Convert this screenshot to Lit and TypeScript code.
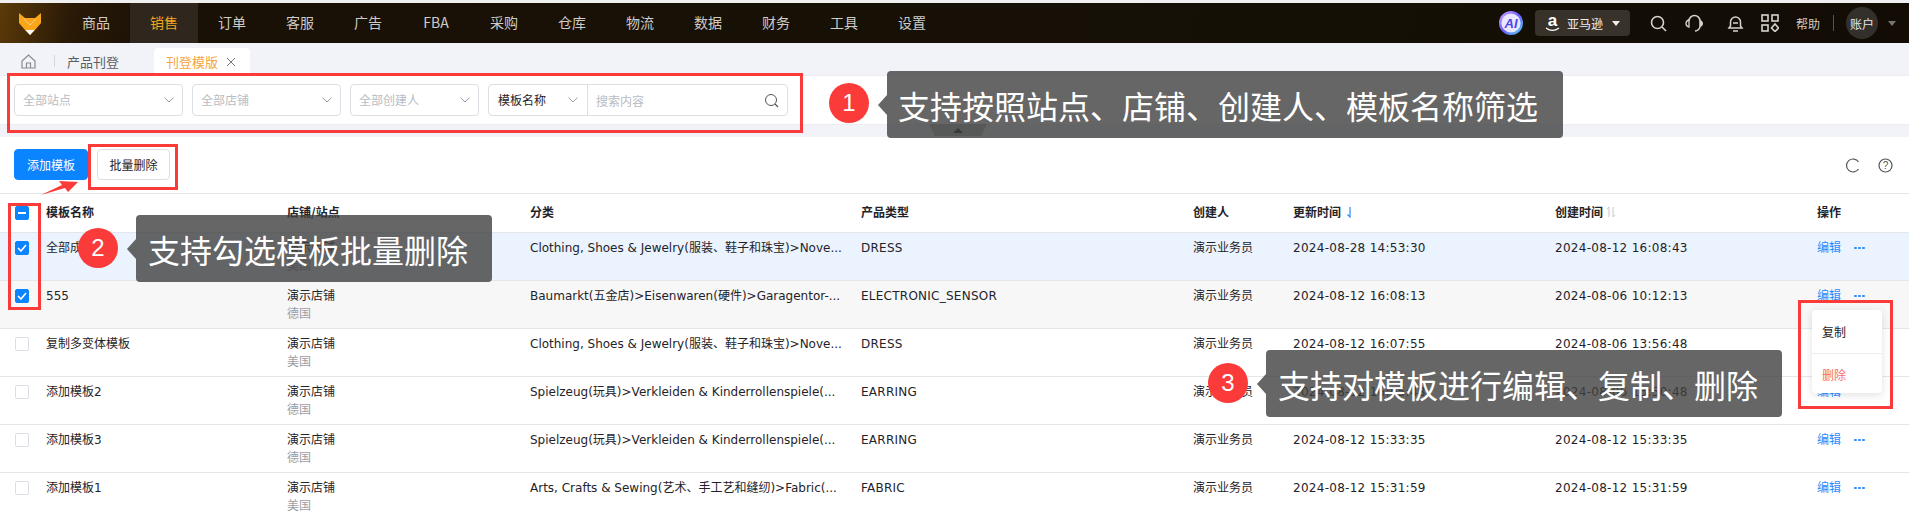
import { LitElement, html, css, svg } from "lit";
import { customElement } from "lit/decorators.js";

const NAV = ["商品", "销售", "订单", "客服", "广告", "FBA", "采购", "仓库", "物流", "数据", "财务", "工具", "设置"];
const ROWS = [
  { name: "全部成人", store: "演示店铺", site: "美国", cat: "Clothing, Shoes & Jewelry(服装、鞋子和珠宝)>Nove...", type: "DRESS", up: "2024-08-28 14:53:30", cr: "2024-08-12 16:08:43", cls: "sel2", check: true },
  { name: "555", store: "演示店铺", site: "德国", cat: "Baumarkt(五金店)>Eisenwaren(硬件)>Garagentor-...", type: "ELECTRONIC_SENSOR", up: "2024-08-12 16:08:13", cr: "2024-08-06 10:12:13", cls: "hov", check: true },
  { name: "复制多变体模板", store: "演示店铺", site: "美国", cat: "Clothing, Shoes & Jewelry(服装、鞋子和珠宝)>Nove...", type: "DRESS", up: "2024-08-12 16:07:55", cr: "2024-08-06 13:56:48", cls: "", check: false },
  { name: "添加模板2", store: "演示店铺", site: "德国", cat: "Spielzeug(玩具)>Verkleiden & Kinderrollenspiele(...", type: "EARRING", up: "2024-08-12 16:05:48", cr: "2024-08-06 13:50:48", cls: "", check: false },
  { name: "添加模板3", store: "演示店铺", site: "德国", cat: "Spielzeug(玩具)>Verkleiden & Kinderrollenspiele(...", type: "EARRING", up: "2024-08-12 15:33:35", cr: "2024-08-12 15:33:35", cls: "", check: false },
  { name: "添加模板1", store: "演示店铺", site: "美国", cat: "Arts, Crafts & Sewing(艺术、手工艺和缝纫)>Fabric(...", type: "FABRIC", up: "2024-08-12 15:31:59", cr: "2024-08-12 15:31:59", cls: "", check: false },
];

const chev = svg`<svg class="chev" viewBox="0 0 10 6" width="10" height="6"><path d="M.5.5 5 5 9.5.5" fill="none" stroke="currentColor" stroke-width="1"/></svg>`;

@customElement("app-root")
export class AppRoot extends LitElement {
  static styles = css`
    :host { display: block; width: 1909px; height: 520px; overflow: hidden; position: relative; background: #fff;
      font-family: "Noto Sans CJK SC", "Noto Sans", sans-serif; font-size: 12px; color: #1f2329; }
    * { box-sizing: border-box; }
    .strip { height: 3px; background: #f0f0f0; }
    .nav { height: 40px; display: flex; align-items: center; color: #cfcbc6;
      background: linear-gradient(100deg, #5c3a08 0, #2a1a06 70px, #1a1106 150px, #151006 1300px, #120c05 100%); }
    .logo { width: 62px; height: 40px; display: flex; align-items: center; padding-left: 19px; flex: none; }
    .item { width: 68px; height: 40px; display: flex; align-items: center; justify-content: center; font-size: 14px; flex: none; padding-bottom: 2px; }
    .item.on { background: #2f271d; color: #f5a623; }
    .right { margin-left: auto; display: flex; align-items: center; height: 40px; padding-right: 13px; }
    .pill { width: 95px; height: 26px; margin-left: 12px; background: #39322a; border-radius: 4px; display: flex; align-items: center;
      color: #f1efec; padding-left: 10px; font-size: 12px; gap: 7px; }
    .pill .cap { width: 0; height: 0; border: 4px solid transparent; border-top: 5px solid #f1efec; border-bottom: 0; margin-left: 2px; }
    .ic { color: #d6d3cf; display: block; flex: none; }
    .help { color: #cfcbc6; margin-left: 17px; font-size: 12px; }
    .dv { width: 1px; height: 16px; background: #57524b; margin: 0 12px 0 13px; }
    .avatar { width: 32px; height: 32px; border-radius: 50%; background: #33302b; color: #e8e6e3; display: flex; align-items: center; justify-content: center; font-size: 12px; }
    .cap2 { width: 0; height: 0; border: 4px solid transparent; border-top: 5px solid #77736d; border-bottom: 0; margin-left: 10px; }

    .crumbs { height: 32px; background: #f1f3f8; display: flex; align-items: flex-end; }
    .home { width: 54px; height: 28px; display: flex; align-items: center; padding-left: 21px; color: #868b94; }
    .sep { width: 1px; height: 12px; background: #d5d7dc; margin-bottom: 8px; }
    .crumb { width: 99px; height: 28px; padding-left: 12px; display: flex; align-items: center; font-size: 13px; color: #595e66; }
    .tab { width: 96px; height: 27px; background: #fff; border-radius: 4px 4px 0 0; padding-left: 12px; display: flex; align-items: center; gap: 8px; color: #f5a640; font-size: 13px; }
    .tab svg { color: #777; }

    .filter { height: 50px; background: #fff; padding: 8px 14px; display: flex; gap: 9px; border-bottom: 1px solid #ebedf0; border-top: 1px solid #ebedf0; }
    .sel { height: 32px; border: 1px solid #dcdfe6; border-radius: 4px; display: flex; align-items: center; justify-content: space-between; padding: 0 8px 1px; color: #b8bcc4; font-size: 12px; }
    .sel .chev { color: #9aa0a8; }
    .s1 { width: 169px; } .s2 { width: 149px; } .s3 { width: 129px; }
    .combo { width: 300px; height: 32px; border: 1px solid #dcdfe6; border-radius: 4px; display: flex; align-items: center; }
    .combo .a { width: 99px; height: 100%; border-right: 1px solid #dcdfe6; display: flex; align-items: center; justify-content: space-between; padding: 0 9px 1px; color: #1f2329; }
    .combo .a .chev { color: #9aa0a8; }
    .combo .b { flex: 1; padding: 0 8px; color: #b8bcc4; display: flex; justify-content: space-between; align-items: center; }
    .gap { height: 12px; background: #f1f3f8; }

    .tools { height: 57px; display: flex; align-items: flex-start; gap: 9px; padding: 12px 14px 0; border-bottom: 1px solid #e4e6ea; }
    .btn { width: 73px; height: 31px; border-radius: 4px; display: flex; align-items: center; justify-content: center; font-size: 12px; border: 1px solid #dcdfe6; background: #fff; color: #1f2329; }
    .btn.pri { background: #0a84ff; border-color: #0a84ff; color: #fff; width: 74px; }
    .tools .end { margin-left: auto; display: flex; align-items: center; gap: 18px; padding: 9px 2px 0 0; color: #555; }

    .row { display: grid; grid-template-columns: 46px 241px 243px 331px 332px 100px 262px 262px 1fr; height: 48px; border-bottom: 1px solid #e4e6ea; padding-top: 6px; line-height: 18px;
      font-family: "DejaVu Sans", "Noto Sans CJK SC", sans-serif; white-space: nowrap; }
    .row.head { height: 39px; font-weight: 700; padding-top: 9px; font-family: "Noto Sans CJK SC", sans-serif; }
    .row.sel2 { background: #eaf3fe; }
    .row.hov { background: #f7f7f7; }
    .cb { width: 14px; height: 14px; margin: 2px 0 0 15px; border: 1.5px solid #dcdfe6; border-radius: 2px; background: #fff; display: flex; align-items: center; justify-content: center; }
    .head .cb { margin-top: 3px; }
    .cb.on { background: #0a84ff; border-color: #0a84ff; color: #fff; }
    .site { color: #9a9da3; }
    .time { letter-spacing: .28px; }
    .type { letter-spacing: .25px; }
    .sort { display: flex; align-items: center; align-self: start; height: 18px; }
    .ops { display: flex; align-items: center; gap: 13px; color: #2a8cff; height: 18px; }
    .dots { display: flex; gap: 1.5px; }
    .dots i { width: 2.5px; height: 2.5px; background: #2a8cff; border-radius: 50%; display: block; }

    .menu { position: absolute; left: 1812px; top: 310px; width: 70px; height: 83px; background: #fff; border-radius: 4px; box-shadow: 0 2px 8px rgba(0,0,0,.12); display: flex; flex-direction: column; }
    .menu div { display: flex; align-items: center; padding-left: 10px; height: 43px; }
    .menu div + div { border-top: 1px solid #ebedf0; color: #f56c6c; height: 40px; padding-top: 2px; }

    .red { position: absolute; border: 3px solid #fb3a3a; }
    .bubble { position: absolute; height: 67px; background: rgba(64,64,64,.8); color: #fff; border-radius: 4px; font-size: 32px; display: flex; align-items: center; white-space: nowrap; line-height: 1; }
    .bubble::before { content: ""; position: absolute; left: -9px; top: 50%; margin-top: -10px; border: 10px solid transparent; border-right: 9px solid rgba(64,64,64,.8); border-left: 0; }
    .num { position: absolute; width: 40px; height: 40px; border-radius: 50%; background: #fb3a3a; color: #fff; font-size: 24px; display: flex; align-items: center; justify-content: center; font-family: "Liberation Sans", sans-serif; }
    .arrow { position: absolute; left: 36px; top: 172px; }
    .collapse { position: absolute; left: 929px; top: 124px; width: 58px; height: 12px; background: rgba(95,95,95,.4); clip-path: polygon(0 0, 100% 0, 90% 100%, 10% 100%); display: flex; align-items: center; justify-content: center; }
    .collapse i { width: 0; height: 0; border: 5px solid transparent; border-bottom: 5px solid #222; border-top: 0; }
  `;

  render() {
    return html`
      <div class="strip"></div>
      <div class="nav">
        <div class="logo">
          <svg width="22" height="23" viewBox="0 0 22 23"><path d="M0 1 6 6h10l6-5v10l-6 7-5 5-5-5-6-7z" fill="#f9a61a"/><path d="M5 7l6 6 6-6" fill="none" stroke="#fff" stroke-opacity=".45" stroke-width="1"/><path d="M6.500 18h9L11 23z" fill="#fff"/></svg>
        </div>
        ${NAV.map((n) => html`<div class="item ${n === "销售" ? "on" : ""}">${n}</div>`)}
        <div class="right">
          <svg width="24" height="24" viewBox="0 0 24 24"><defs><linearGradient id="ai" x1="0" y1="0" x2="1" y2="1"><stop offset="0" stop-color="#d6a6ff"/><stop offset=".5" stop-color="#6a5cff"/><stop offset="1" stop-color="#4fd8f0"/></linearGradient></defs><circle cx="12" cy="12" r="12" fill="url(#ai)"/><circle cx="12" cy="12" r="9.6" fill="#e9e6ff"/><text x="12" y="16.500" text-anchor="middle" font-family="Liberation Sans" font-size="13" font-weight="700" font-style="italic" fill="#4f46e5">AI</text></svg>
          <div class="pill">
            <svg width="15" height="20" viewBox="0 0 15 20"><text x="7.500" y="13" text-anchor="middle" font-family="Liberation Sans" font-size="17" font-weight="700" fill="#fff">a</text><path d="M1 15c4 3 9 3 13 0" fill="none" stroke="#fff" stroke-width="1.300"/></svg>
            <span>亚马逊</span><span class="cap"></span>
          </div>
          <svg class="ic" style="margin-left:20px" width="17" height="17" viewBox="0 0 17 17"><circle cx="7.500" cy="7.500" r="6" fill="none" stroke="currentColor" stroke-width="1.600"/><path d="m12 12 4 4" stroke="currentColor" stroke-width="1.600"/></svg>
          <svg class="ic" style="margin-left:18px" width="19" height="19" viewBox="0 0 19 19"><path d="M4 7a5.500 5.500 0 0 1 11 0v5a5 5 0 0 1-5 5" fill="none" stroke="currentColor" stroke-width="1.500"/><path d="M4 6C2 6.500 1 8 1 9.500S2 12.500 4 13z" fill="none" stroke="currentColor" stroke-width="1.300"/><path d="M15 6c2 .5 3 2 3 3.500S17 12.500 15 13z" fill="currentColor"/></svg>
          <svg class="ic" style="margin-left:22px" width="19" height="19" viewBox="0 0 19 19"><path d="M3 14h13l-1.500-2V8a5 5 0 0 0-10 0v4zM7 17h5M7 9h5" fill="none" stroke="currentColor" stroke-width="1.500"/></svg>
          <svg class="ic" style="margin-left:16px" width="18" height="18" viewBox="0 0 18 18"><g fill="none" stroke="currentColor" stroke-width="1.600"><rect x="1" y="1" width="6" height="6"/><rect x="11" y="1" width="6" height="6"/><rect x="1" y="11" width="6" height="6"/><path d="m14 10 3.500 4-3.500 3.500-3.500-3.500z"/></g></svg>
          <span class="help">帮助</span>
          <span class="dv"></span>
          <div class="avatar">账户</div>
          <span class="cap2"></span>
        </div>
      </div>
      <div class="crumbs">
        <div class="home"><svg width="15" height="15" viewBox="0 0 15 15"><path d="M1 7 7.500 1 14 7v7H1zM5.500 14V9h4v5" fill="none" stroke="currentColor" stroke-width="1.200"/></svg></div>
        <span class="sep"></span>
        <div class="crumb">产品刊登</div>
        <div class="tab">刊登模版 <svg width="10" height="10" viewBox="0 0 10 10"><path d="m1 1 8 8M9 1 1 9" stroke="currentColor" stroke-width="1"/></svg></div>
      </div>
      <div class="filter">
        <div class="sel s1">全部站点 ${chev}</div>
        <div class="sel s2">全部店铺 ${chev}</div>
        <div class="sel s3">全部创建人 ${chev}</div>
        <div class="combo">
          <div class="a">模板名称 ${chev}</div>
          <div class="b">搜索内容 <svg width="15" height="15" viewBox="0 0 15 15" style="color:#555"><circle cx="7" cy="7" r="5.500" fill="none" stroke="currentColor" stroke-width="1"/><path d="m11 11 3 3" stroke="currentColor" stroke-width="1.200"/></svg></div>
        </div>
      </div>
      <div class="gap"></div>
      <div class="tools">
        <div class="btn pri">添加模板</div>
        <div class="btn">批量删除</div>
        <div class="end">
          <svg width="15" height="15" viewBox="0 0 15 15"><path d="M13.500 4A6.500 6.500 0 1 0 13.500 11" fill="none" stroke="currentColor" stroke-width="1.200"/></svg>
          <svg width="15" height="15" viewBox="0 0 15 15"><circle cx="7.500" cy="7.500" r="6.500" fill="none" stroke="currentColor" stroke-width="1.200"/><text x="7.500" y="11" text-anchor="middle" font-size="10" font-family="Liberation Sans" fill="currentColor">?</text></svg>
        </div>
      </div>
      <div class="row head">
        <div class="cb on"><svg width="8" height="2" viewBox="0 0 8 2"><path d="M0 1h8" stroke="#fff" stroke-width="2"/></svg></div>
        <div>模板名称</div><div>店铺/站点</div><div>分类</div><div>产品类型</div><div>创建人</div>
        <div class="sort">更新时间&nbsp;&nbsp;<svg width="8" height="12" viewBox="0 0 8 12"><path d="M4 1v10L1.500 8.500" fill="none" stroke="#2a8cff" stroke-width="1.200"/></svg></div>
        <div class="sort">创建时间&nbsp;<svg width="10" height="12" viewBox="0 0 10 12"><path d="M3 11V1L1 3M7 1v10l2-2" fill="none" stroke="#c4c7cc" stroke-width="1"/></svg></div>
        <div>操作</div>
      </div>
      ${ROWS.map((r) => html`
        <div class="row ${r.cls}">
          <div class="cb ${r.check ? "on" : ""}">${r.check ? html`<svg width="10" height="8" viewBox="0 0 10 8"><path d="M1 4l3 3 5-6" fill="none" stroke="#fff" stroke-width="1.600"/></svg>` : ""}</div>
          <div>${r.name}</div>
          <div><div>${r.store}</div><div class="site">${r.site}</div></div>
          <div>${r.cat}</div><div class="type">${r.type}</div><div>演示业务员</div><div class="time">${r.up}</div><div class="time">${r.cr}</div>
          <div class="ops"><span>编辑</span><span class="dots"><i></i><i></i><i></i></span></div>
        </div>`)}

      <div class="menu"><div>复制</div><div>删除</div></div>
      <div class="collapse"><i></i></div>
      <div class="red" style="left:7px;top:73px;width:796px;height:60px"></div>
      <div class="red" style="left:88px;top:144px;width:90px;height:46px"></div>
      <div class="red" style="left:8px;top:203px;width:33px;height:107px"></div>
      <div class="red" style="left:1798px;top:300px;width:95px;height:109px"></div>
      <svg class="arrow" width="60" height="26" viewBox="0 0 60 26"><path d="M5 23 26 13l-3-4 19 1-10 10-3-4z" fill="#fb3a3a"/></svg>
      <div class="num" style="left:829px;top:83px">1</div>
      <div class="bubble" style="left:887px;top:71px;width:676px;padding-left:11px">支持按照站点、店铺、创建人、模板名称筛选</div>
      <div class="num" style="left:78px;top:228px">2</div>
      <div class="bubble" style="left:136px;top:215px;width:356px;padding-left:12px">支持勾选模板批量删除</div>
      <div class="num" style="left:1208px;top:363px">3</div>
      <div class="bubble" style="left:1266px;top:350px;width:516px;padding-left:12px">支持对模板进行编辑、复制、删除</div>
    `;
  }
}
